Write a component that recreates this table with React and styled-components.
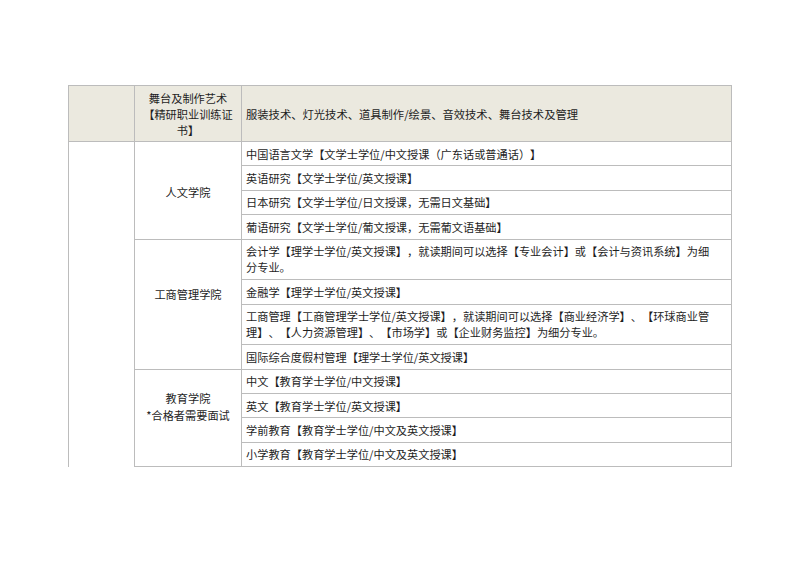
import React from "react";
import styled, { createGlobalStyle } from "styled-components";

const Global = createGlobalStyle`
  html, body { margin: 0; padding: 0; background: #ffffff; }
  body {
    font-family: "Noto Sans CJK SC", "Noto Sans", "Liberation Sans", sans-serif;
    color: #1e1e1e;
    font-size: 11.2px;
    text-spacing-trim: space-all;
  }
`;

const BORDER = "#bcbcbc";

const Page = styled.div`
  width: 800px;
  height: 566px;
  padding: 85px 0 0 68px;
  box-sizing: border-box;
`;

const Table = styled.div`
  width: 664px;
  display: flex;
  flex-direction: column;
`;

const HeaderRow = styled.div`
  display: flex;
  height: 57px;
  box-sizing: border-box;
  border-top: 1px solid ${BORDER};
  border-bottom: 1px solid ${BORDER};
  background: #ebe9df;
`;

const HeadBlank = styled.div`
  width: 67px;
  flex: none;
  box-sizing: border-box;
  border-left: 1px solid ${BORDER};
  border-right: 1px solid ${BORDER};
`;

const HeadLabel = styled.div`
  width: 107px;
  flex: none;
  box-sizing: border-box;
  border-right: 1px solid ${BORDER};
  display: flex;
  align-items: center;
  justify-content: center;
  text-align: center;
  line-height: 16.3px;
  padding-top: 1px;
  white-space: nowrap;
`;

const HeadText = styled.div`
  flex: 1;
  box-sizing: border-box;
  border-right: 1px solid ${BORDER};
  display: flex;
  align-items: center;
  padding: 1px 4px 0 4px;
  font-size: 11.3px;
`;

const Body = styled.div`
  display: flex;
`;

const BodyBlank = styled.div`
  width: 67px;
  flex: none;
  box-sizing: border-box;
  border-left: 1px solid ${BORDER};
  border-right: 1px solid ${BORDER};
`;

const Groups = styled.div`
  flex: 1;
  display: flex;
  flex-direction: column;
`;

const Group = styled.div`
  display: flex;
`;

const GroupLabel = styled.div`
  width: 107px;
  flex: none;
  box-sizing: border-box;
  border-right: 1px solid ${BORDER};
  border-bottom: 1px solid ${BORDER};
  display: flex;
  align-items: center;
  justify-content: center;
  text-align: center;
  line-height: 16.5px;
  white-space: nowrap;
  padding-top: ${(p) => (p.$shift > 0 ? p.$shift * 2 : 0)}px;
  padding-bottom: ${(p) => (p.$shift < 0 ? -p.$shift * 2 : 0)}px;
`;

const Items = styled.div`
  flex: 1;
  display: flex;
  flex-direction: column;
`;

const Item = styled.div`
  box-sizing: border-box;
  border-right: 1px solid ${BORDER};
  border-bottom: 1px solid ${BORDER};
  padding: 3.6px 4px 3.6px 4px;
  line-height: 16.2px;
  white-space: nowrap;
`;

const header = {
  label: ["舞台及制作艺术", "【精研职业训练证", "书】"],
  text: "服装技术、灯光技术、道具制作/绘景、音效技术、舞台技术及管理",
};

const groups = [
  {
    label: ["人文学院"],
    shift: 2,
    items: [
      ["中国语言文学【文学士学位/中文授课（广东话或普通话）】"],
      ["英语研究【文学士学位/英文授课】"],
      ["日本研究【文学士学位/日文授课，无需日文基础】"],
      ["葡语研究【文学士学位/葡文授课，无需葡文语基础】"],
    ],
  },
  {
    label: ["工商管理学院"],
    shift: -10,
    items: [
      [
        "会计学【理学士学位/英文授课】，就读期间可以选择【专业会计】或【会计与资讯系统】为细",
        "分专业。",
      ],
      ["金融学【理学士学位/英文授课】"],
      [
        "工商管理【工商管理学士学位/英文授课】，就读期间可以选择【商业经济学】、【环球商业管",
        "理】、【人力资源管理】、【市场学】或【企业财务监控】为细分专业。",
      ],
      ["国际综合度假村管理【理学士学位/英文授课】"],
    ],
  },
  {
    label: ["教育学院", "*合格者需要面试"],
    shift: -11,
    items: [
      ["中文【教育学士学位/中文授课】"],
      ["英文【教育学士学位/英文授课】"],
      ["学前教育【教育学士学位/中文及英文授课】"],
      ["小学教育【教育学士学位/中文及英文授课】"],
    ],
  },
];

const Lines = ({ lines }) =>
  lines.map((l, i) => (
    <React.Fragment key={i}>
      {i > 0 && <br />}
      {l}
    </React.Fragment>
  ));

export default function App() {
  return (
    <Page>
      <Global />
      <Table>
        <HeaderRow>
          <HeadBlank />
          <HeadLabel>
            <div>
              <Lines lines={header.label} />
            </div>
          </HeadLabel>
          <HeadText>{header.text}</HeadText>
        </HeaderRow>
        <Body>
          <BodyBlank />
          <Groups>
            {groups.map((g, gi) => (
              <Group key={gi}>
                <GroupLabel $shift={g.shift}>
                  <div>
                    <Lines lines={g.label} />
                  </div>
                </GroupLabel>
                <Items>
                  {g.items.map((it, ii) => (
                    <Item key={ii}>
                      <Lines lines={it} />
                    </Item>
                  ))}
                </Items>
              </Group>
            ))}
          </Groups>
        </Body>
      </Table>
    </Page>
  );
}
